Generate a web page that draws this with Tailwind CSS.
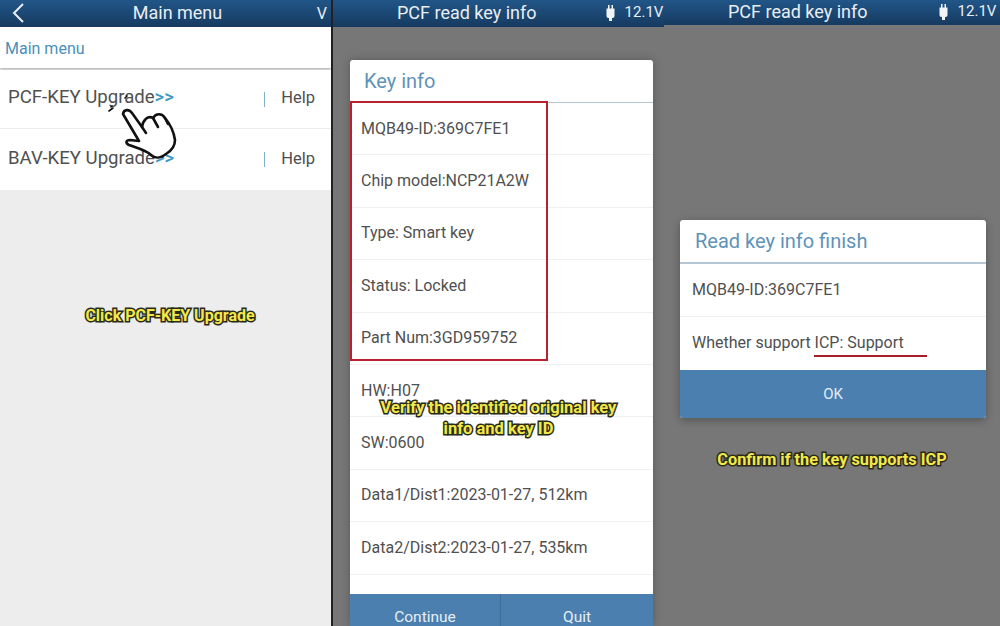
<!DOCTYPE html>
<html lang="en">
<head>
    <meta charset="UTF-8">
    <meta name="viewport" content="width=device-width, initial-scale=1.0">
    <title>PCF read key info</title>
    <script src="https://cdn.jsdelivr.net/npm/@tailwindcss/browser@4"></script>
</head>
<body class="bg-black">
    <div class="flex w-[1000px] h-[626px] overflow-hidden bg-[#222222] font-['Roboto',sans-serif] text-[#505050]">

        <!-- Main menu -->
        <section class="relative w-[331px] shrink-0 flex flex-col bg-[#ededed]">
            <header class="relative h-[27px] flex items-center justify-center pb-[2px] bg-gradient-to-b from-[#215688] to-[#163a60] text-[#e8eef4] text-[18px]">
                <svg class="absolute left-[12px] top-[3px]" width="13" height="20" viewBox="0 0 13 20" fill="none" stroke="#e8eef4" stroke-width="2"><path d="M11 1 L2 10 L11 19"/></svg>
                <span class="ml-[24px]">Main menu</span>
                <span class="absolute right-[4px] top-[2px] text-[16px]">V</span>
            </header>
            <div class="h-[41px] flex items-center pl-[5px] pt-[2px] bg-white text-[#4a90b8] text-[16px] shadow-[0_1px_3px_rgba(0,0,0,0.3)]">Main menu</div>
            <div class="mt-[2px] h-[59px] flex items-center bg-white border-b border-[#ececec] pl-[8px] text-[18.600px]">
                <span class="mb-[2px]">PCF-KEY Upgrade</span><span class="mb-[2px] text-[#3f97c4] font-medium">&gt;&gt;</span>
                <span class="ml-auto w-px h-[15px] bg-[#7fb2c9]"></span>
                <span class="ml-[16px] mr-[16px] text-[16.500px] mb-[2px]">Help</span>
            </div>
            <div class="h-[61px] flex items-center bg-white pl-[8px] text-[18.600px]">
                <span class="mb-[1px]">BAV-KEY Upgrade</span><span class="mb-[1px] text-[#3f97c4] font-medium">&gt;&gt;</span>
                <span class="ml-auto w-px h-[15px] bg-[#7fb2c9]"></span>
                <span class="ml-[16px] mr-[16px] text-[16.500px]">Help</span>
            </div>

            <!-- tap hand -->
            <svg class="absolute left-0 top-0" width="331" height="190" viewBox="0 0 331 190" fill="none" stroke="#111" stroke-width="2.6" stroke-linejoin="round" stroke-linecap="round">
                <path fill="#fff" d="M123 114 C124 109 129 109 132 113 L142 127 C143 120 148 115 153 118 C156 113 162 113 165 118 C170 124 174 133 175 140 C175 147 171 151 166 154 C161 158 155 159 151 155 C146 150 137 148 129 145 C125 143 126 140 130 140 L139 141 Z"/>
                <path d="M142 127 L146 133 M153 118 L158 127 M165 118 L168 124"/>
                <path stroke-width="1.6" d="M109 111 L113 108 M111 107 L112 106 M125 98 L127 96"/>
            </svg>

            <p class="absolute left-[9px] right-0 top-[306px] text-center text-[16px] leading-[20px] font-bold text-[#f2e84a] [-webkit-text-stroke:3px_#2a2a1a] [paint-order:stroke_fill]">Click PCF-KEY Upgrade</p>
        </section>

        <!-- Key info -->
        <section class="relative w-[331px] ml-[2px] shrink-0 flex flex-col bg-[#777777]">
            <header class="relative h-[27px] flex items-center pb-[2px] bg-gradient-to-b from-[#215688] to-[#163a60] text-[#e8eef4] text-[18px]">
                <span class="ml-[64px]">PCF read key info</span>
                <svg class="ml-[68px]" width="11" height="18" viewBox="0 0 11 18" fill="#f2f4f6"><path d="M3 1h1.500v4H3zM6.500 1H8v4H6.500zM1.500 4.500h8V12a2 2 0 0 1-2 2h-4a2 2 0 0 1-2-2zM4 14h3v3H4z"/></svg>
                <span class="ml-[9px] text-[15px]">12.1V</span>
            </header>
            <div class="relative mt-[33px] ml-[17px] w-[303px] h-[566px] flex flex-col bg-white rounded-t-[3px] shadow-[0_0_10px_rgba(0,0,0,0.25)] text-[16px]">
                <div class="h-[43px] flex items-center pl-[14px] border-b border-[#b5c7d4] text-[#5f93b8] text-[20px]">Key info</div>
                <ul class="flex-1 overflow-hidden">
                    <li class="h-[52.400px] flex items-center pl-[11px] border-b border-[#f0f0f0]">MQB49-ID:369C7FE1</li>
                    <li class="h-[52.400px] flex items-center pl-[11px] border-b border-[#f0f0f0]">Chip model:NCP21A2W</li>
                    <li class="h-[52.400px] flex items-center pl-[11px] border-b border-[#f0f0f0]">Type: Smart key</li>
                    <li class="h-[52.400px] flex items-center pl-[11px] border-b border-[#f0f0f0]">Status: Locked</li>
                    <li class="h-[52.400px] flex items-center pl-[11px] border-b border-[#f0f0f0]">Part Num:3GD959752</li>
                    <li class="h-[52.400px] flex items-center pl-[11px] border-b border-[#f0f0f0]">HW:H07</li>
                    <li class="h-[52.400px] flex items-center pl-[11px] border-b border-[#f0f0f0]">SW:0600</li>
                    <li class="h-[52.400px] flex items-center pl-[11px] border-b border-[#f0f0f0]">Data1/Dist1:2023-01-27, 512km</li>
                    <li class="h-[52.400px] flex items-center pl-[11px] border-b border-[#f0f0f0]">Data2/Dist2:2023-01-27, 535km</li>
                </ul>
                <div class="h-[32px] flex items-start bg-[#4a7fb0] text-[#e6eef5] text-[15.500px] leading-[20px]">
                    <span class="flex-1 text-center pt-[13px] border-r border-[#3d6c97] h-full">Continue</span>
                    <span class="w-[152px] text-center pt-[13px]">Quit</span>
                </div>
                <div class="absolute left-0 top-[41px] w-[198px] h-[260px] border-[2px] border-[#b8222f]"></div>
            </div>
            <p class="absolute left-0 right-0 top-[397px] text-center text-[16.500px] leading-[21px] font-bold text-[#f2e84a] [-webkit-text-stroke:3px_#2a2a1a] [paint-order:stroke_fill]">Verify the identified original key<br>info and key ID</p>
        </section>

        <!-- Read finished -->
        <section class="relative flex-1 flex flex-col bg-[#777777]">
            <header class="relative h-[25px] flex items-center pb-[2px] bg-gradient-to-b from-[#215688] to-[#163a60] text-[#e8eef4] text-[18px]">
                <span class="ml-[64px]">PCF read key info</span>
                <svg class="ml-[70px]" width="11" height="18" viewBox="0 0 11 18" fill="#f2f4f6"><path d="M3 1h1.500v4H3zM6.500 1H8v4H6.500zM1.500 4.500h8V12a2 2 0 0 1-2 2h-4a2 2 0 0 1-2-2zM4 14h3v3H4z"/></svg>
                <span class="ml-[9px] text-[15px]">12.1V</span>
            </header>
            <div class="mt-[195px] ml-[16px] w-[306px] h-[198px] flex flex-col bg-white rounded-[3px] overflow-hidden shadow-[0_2px_8px_rgba(0,0,0,0.3)] text-[16px]">
                <div class="h-[44px] flex items-center pl-[15px] border-b-2 border-[#b5c7d4] text-[#5f93b8] text-[20px]">Read key info finish</div>
                <div class="h-[53px] flex items-center pl-[12px] border-b border-[#f0f0f0]">MQB49-ID:369C7FE1</div>
                <div class="h-[53px] flex items-center pl-[12px] pb-[2px]">Whether support ICP: Support</div>
                <div class="flex-1 flex items-center justify-center bg-[#4a7fb0] text-[#e6eef5] text-[15px]">OK</div>
            </div>
            <div class="absolute left-[150px] top-[355px] w-[113px] h-[2px] bg-[#a81c2c]"></div>
            <p class="absolute left-0 right-0 top-[450px] text-center text-[16.300px] leading-[20px] font-bold text-[#f2e84a] [-webkit-text-stroke:3px_#2a2a1a] [paint-order:stroke_fill]">Confirm if the key supports ICP</p>
        </section>
    </div>
</body>
</html>
